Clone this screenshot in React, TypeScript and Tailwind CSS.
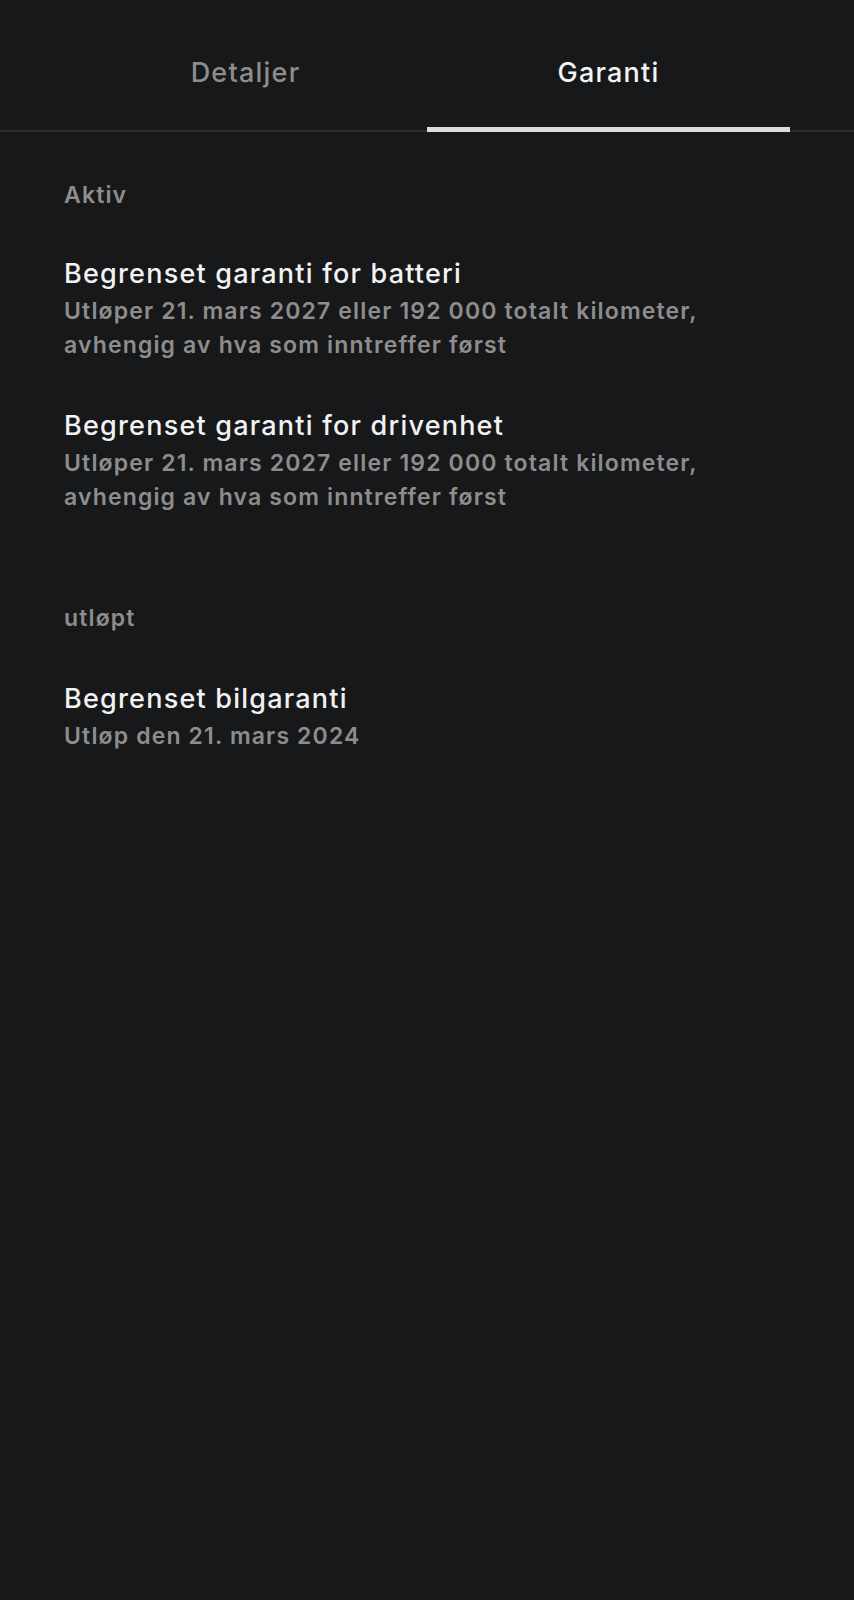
import React from 'react';

const items = {
  active: [
    {
      title: 'Begrenset garanti for batteri',
      sub: 'Utløper 21. mars 2027 eller 192 000 totalt kilometer, avhengig av hva som inntreffer først',
    },
    {
      title: 'Begrenset garanti for drivenhet',
      sub: 'Utløper 21. mars 2027 eller 192 000 totalt kilometer, avhengig av hva som inntreffer først',
    },
  ],
  expired: [{ title: 'Begrenset bilgaranti', sub: 'Utløp den 21. mars 2024' }],
};

function Warranty({ title, sub, top }: { title: string; sub: string; top: string }) {
  return (
    <div className={top}>
      <div className="text-[27px] leading-[34px] font-medium tracking-[0.045em] text-[#f2f2f2]">{title}</div>
      <div className="mt-[3px] text-[23px] leading-[34px] font-semibold tracking-[0.05em] text-[#8d8d8e] max-w-[680px]">
        {sub}
      </div>
    </div>
  );
}

export default function App() {
  return (
    <div className="min-h-[1600px] w-full bg-[#17181a] font-['Inter','Noto_Sans',sans-serif]">
      {/* tabs */}
      <div className="flex px-16 h-[132px] border-b-2 border-[#2b2c2e]">
        <div className="flex-1 flex flex-col items-center">
          <div className="pt-[57px] text-[27px] leading-8 font-medium tracking-[0.045em] text-[#8d8d8e]">Detaljer</div>
        </div>
        <div className="flex-1 flex flex-col items-center">
          <div className="pt-[57px] text-[27px] leading-8 font-medium tracking-[0.045em] text-[#f4f4f4]">Garanti</div>
          <div className="mt-auto -mb-[2px] h-[5px] w-full bg-[#dcdcdc]" />
        </div>
      </div>

      <div className="px-16 pt-[49px]">
        <div className="text-[23px] leading-[28px] font-semibold tracking-[0.05em] text-[#8d8d8e]">Aktiv</div>
        {items.active.map((it, i) => (
          <Warranty key={i} title={it.title} sub={it.sub} top={i === 0 ? 'mt-[48px]' : 'mt-[47px]'} />
        ))}

        <div className="mt-[90px] text-[23px] leading-[28px] font-semibold tracking-[0.05em] text-[#8d8d8e]">utløpt</div>
        {items.expired.map((it, i) => (
          <Warranty key={i} title={it.title} sub={it.sub} top="mt-[50px]" />
        ))}
      </div>
    </div>
  );
}
